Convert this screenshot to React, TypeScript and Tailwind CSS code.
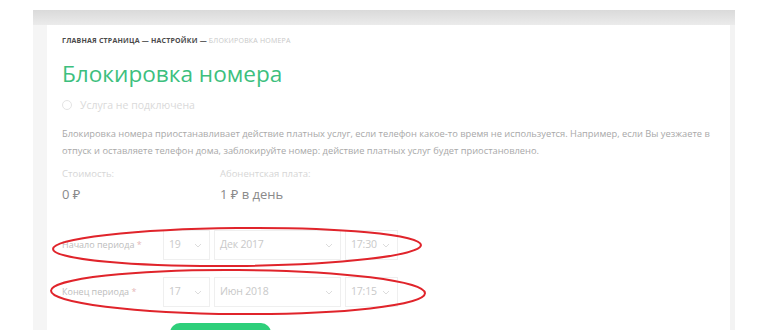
import React from 'react'

const font = { fontFamily: '"Open Sans", "Noto Sans", sans-serif' }

function Chevron() {
  return (
    <svg width="8" height="5" viewBox="0 0 8 5" className="shrink-0">
      <path d="M1 1l3 3 3-3" fill="none" stroke="#dcdcdc" strokeWidth="1" />
    </svg>
  )
}

function SelectBox({ value, width }: { value: string; width: string }) {
  return (
    <div className={`${width} h-[30px] border border-[#efefef] flex items-center justify-between pl-[5px] pr-[7px] text-[10.5px] tracking-[-0.2px] text-[#c9c9c9]`}>
      <span>{value}</span>
      <Chevron />
    </div>
  )
}

function PeriodRow({ label, day, month, time }: { label: string; day: string; month: string; time: string }) {
  return (
    <div className="flex items-center">
      <div className="w-[101px] text-[9px] text-[#bdbdbd]">
        {label} <span className="text-[#e6b8b8]">*</span>
      </div>
      <div className="flex gap-[4px]">
        <SelectBox value={day} width="w-[47px]" />
        <SelectBox value={month} width="w-[127px]" />
        <SelectBox value={time} width="w-[53px]" />
      </div>
    </div>
  )
}

export default function App() {
  return (
    <div className="relative w-[770px] h-[330px] bg-white overflow-hidden" style={font}>
      <div className="h-[10px]" />
      <div className="ml-[33px] w-[702px] h-[320px] flex flex-col overflow-hidden">
        <div className="h-[15px] shrink-0 bg-linear-to-b from-[#dadada] to-[#ebebeb]" />
        <div className="flex flex-1 min-h-0">
          <div className="w-[14px] bg-[#f5f5f5]" />
          <div className="flex-1 bg-white pl-[15px] pt-[11px]">
            {/* breadcrumbs */}
            <div className="text-[7px] font-bold tracking-[0.2px] text-[#4a4a4a] whitespace-nowrap">
              ГЛАВНАЯ СТРАНИЦА — НАСТРОЙКИ — <span className="font-normal text-[#c8c8c8]">БЛОКИРОВКА НОМЕРА</span>
            </div>

            <h1 className="mt-[13px] text-[22.6px] leading-[28px] text-[#3dbf7e]">Блокировка номера</h1>

            <div className="mt-[10px] flex items-center gap-[8px]">
              <div className="w-[10px] h-[10px] rounded-full border border-[#e4e4e4]" />
              <span className="text-[10.5px] text-[#dadada]">Услуга не подключена</span>
            </div>

            <div className="mt-[12px] text-[9.3px] leading-[17px] text-[#a8a8a8] whitespace-nowrap">
              Блокировка номера приостанавливает действие платных услуг, если телефон какое-то время не используется. Например, если Вы уезжаете в
              <br />
              отпуск и оставляете телефон дома, заблокируйте номер: действие платных услуг будет приостановлено.
            </div>

            <div className="mt-[8px] flex">
              <div className="w-[158px]">
                <div className="text-[9.5px] text-[#d6d6d6]">Стоимость:</div>
                <div className="mt-[3px] text-[13px] text-[#8a8a8a]">0 ₽</div>
              </div>
              <div>
                <div className="text-[9.5px] text-[#d6d6d6]">Абонентская плата:</div>
                <div className="mt-[3px] text-[13px] text-[#8a8a8a]">1 ₽ в день</div>
              </div>
            </div>

            <div className="mt-[26px] flex flex-col gap-[17px]">
              <PeriodRow label="Начало периода" day="19" month="Дек 2017" time="17:30" />
              <PeriodRow label="Конец периода" day="17" month="Июн 2018" time="17:15" />
            </div>

            <div className="mt-[16px] ml-[108px] w-[101px] h-[20px] rounded-t-[10px] bg-[#2ecf7a]" />
          </div>
          <div className="w-[5px] bg-[#f3f3f3]" />
        </div>
      </div>

      <svg className="absolute inset-0 pointer-events-none" width="770" height="330">
        <ellipse cx="237" cy="247" rx="184" ry="19" fill="none" stroke="#e0242b" strokeWidth="2" transform="rotate(-0.6 237 247)" />
        <ellipse cx="238" cy="292" rx="187" ry="22" fill="none" stroke="#e0242b" strokeWidth="2" transform="rotate(0.4 238 292)" />
      </svg>
    </div>
  )
}
